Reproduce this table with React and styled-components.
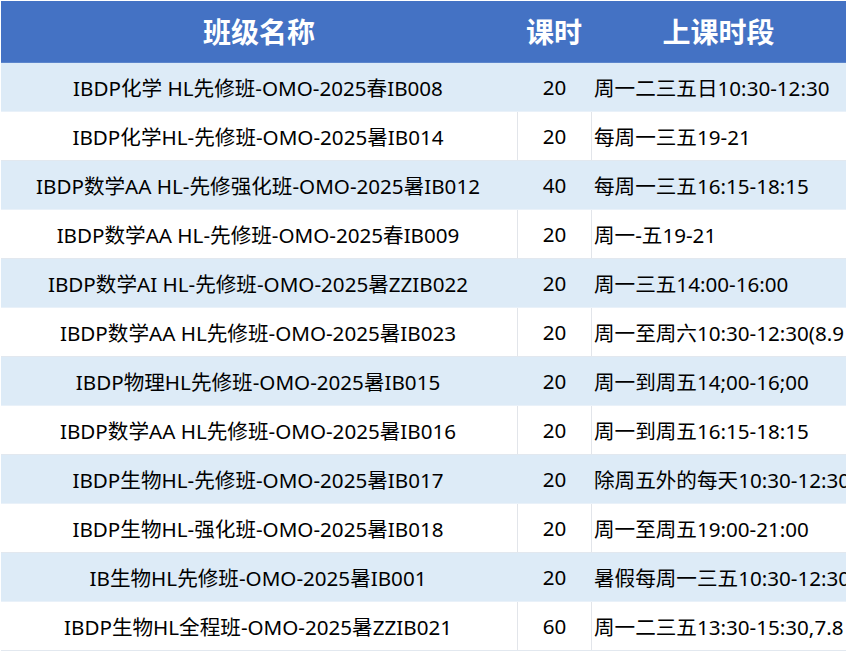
import React from "react";
import styled, { createGlobalStyle } from "styled-components";

const rows = [
  ["IBDP化学 HL先修班-OMO-2025春IB008", "20", "周一二三五日10:30-12:30"],
  ["IBDP化学HL-先修班-OMO-2025暑IB014", "20", "每周一三五19-21"],
  ["IBDP数学AA HL-先修强化班-OMO-2025暑IB012", "40", "每周一三五16:15-18:15"],
  ["IBDP数学AA HL-先修班-OMO-2025春IB009", "20", "周一-五19-21"],
  ["IBDP数学AI HL-先修班-OMO-2025暑ZZIB022", "20", "周一三五14:00-16:00"],
  ["IBDP数学AA HL先修班-OMO-2025暑IB023", "20", "周一至周六10:30-12:30(8.9"],
  ["IBDP物理HL先修班-OMO-2025暑IB015", "20", "周一到周五14;00-16;00"],
  ["IBDP数学AA HL先修班-OMO-2025暑IB016", "20", "周一到周五16:15-18:15"],
  ["IBDP生物HL-先修班-OMO-2025暑IB017", "20", "除周五外的每天10:30-12:30"],
  ["IBDP生物HL-强化班-OMO-2025暑IB018", "20", "周一至周五19:00-21:00"],
  ["IB生物HL先修班-OMO-2025暑IB001", "20", "暑假每周一三五10:30-12:30"],
  ["IBDP生物HL全程班-OMO-2025暑ZZIB021", "60", "周一二三五13:30-15:30,7.8"],
];

const GlobalStyle = createGlobalStyle`
  body {
    margin: 0;
    background: #ffffff;
    font-family: "Noto Sans", "Noto Sans CJK SC", sans-serif;
    overflow: hidden;
  }
`;

const App = () => {
  return (
    <>
      <GlobalStyle />
      <Table>
        <HeadRow>
          <HeadCell>班级名称</HeadCell>
          <HeadCell>课时</HeadCell>
          <HeadCell>上课时段</HeadCell>
        </HeadRow>
        {rows.map((r, i) => (
          <Row key={i} $shaded={i % 2 === 0}>
            <NameCell>{r[0]}</NameCell>
            <HoursCell $shaded={i % 2 === 0}>{r[1]}</HoursCell>
            <TimeCell $shaded={i % 2 === 0}>{r[2]}</TimeCell>
          </Row>
        ))}
      </Table>
    </>
  );
};

export default App;

const Table = styled.div`
  width: 846px;
  height: 651px;
  overflow: hidden;
  padding: 1px 0 0 1px;
  box-sizing: border-box;
`;

const HeadRow = styled.div`
  display: grid;
  grid-template-columns: 516px 74px 1fr;
  height: 61px;
  background: #4472c4;
  border-bottom: 1px solid #5b85cc;
`;

const HeadCell = styled.div`
  display: flex;
  align-items: center;
  justify-content: center;
  color: #ffffff;
  font-family: "Noto Sans CJK SC", sans-serif;
  font-weight: 700;
  font-size: 28px;
  padding-bottom: 2px;
`;

const Row = styled.div`
  display: grid;
  grid-template-columns: 516px 74px 1fr;
  height: 49px;
  box-sizing: border-box;
  background: ${(p) => (p.$shaded ? "#ddebf7" : "#ffffff")};
  border-bottom: 1px solid ${(p) => (p.$shaded ? "#e9f1f9" : "#e2e8ef")};
  color: #000000;
  font-size: 20.6px;
`;

const Cell = styled.div`
  display: flex;
  align-items: center;
  white-space: nowrap;
  overflow: hidden;
`;

const NameCell = styled(Cell)`
  justify-content: center;
  padding-right: 2px;
`;

const HoursCell = styled(Cell)`
  justify-content: center;
  border-left: 1px solid ${(p) => (p.$shaded ? "#ddebf7" : "#e2e5ea")};
`;

const TimeCell = styled(Cell)`
  justify-content: flex-start;
  padding-left: 2px;
  border-left: 1px solid ${(p) => (p.$shaded ? "#ddebf7" : "#e2e5ea")};
`;
